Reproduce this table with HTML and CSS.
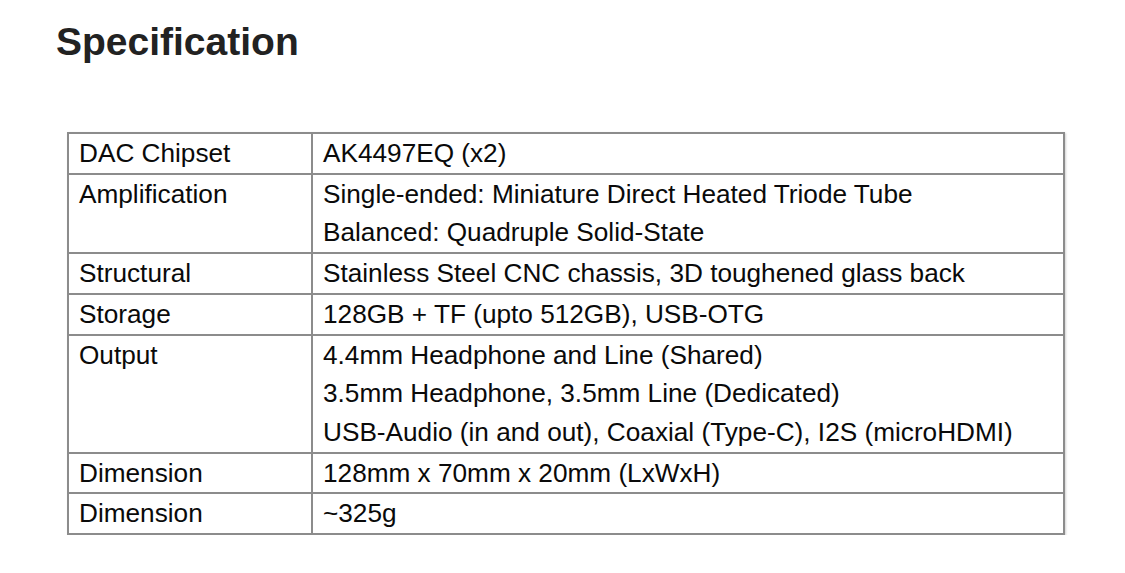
FILE: index.html
```html
<!DOCTYPE html>
<html lang="en">
<head>
<meta charset="utf-8">
<title>Specification</title>
<link rel="stylesheet" href="styles.css">
</head>
<body>
<main class="page">
  <h1 class="title">Specification</h1>
  <table class="spec">
    <tr><td class="key">DAC Chipset</td><td class="val">AK4497EQ (x2)</td></tr>
    <tr><td class="key">Amplification</td><td class="val">Single-ended: Miniature Direct Heated Triode Tube<br>Balanced: Quadruple Solid-State</td></tr>
    <tr><td class="key">Structural</td><td class="val">Stainless Steel CNC chassis, 3D toughened glass back</td></tr>
    <tr><td class="key">Storage</td><td class="val">128GB + TF (upto 512GB), USB-OTG</td></tr>
    <tr><td class="key">Output</td><td class="val">4.4mm Headphone and Line (Shared)<br>3.5mm Headphone, 3.5mm Line (Dedicated)<br>USB-Audio (in and out), Coaxial (Type-C), I2S (microHDMI)</td></tr>
    <tr><td class="key">Dimension</td><td class="val">128mm x 70mm x 20mm (LxWxH)</td></tr>
    <tr><td class="key">Dimension</td><td class="val">~325g</td></tr>
  </table>
</main>
</body>
</html>
```
FILE: styles.css
```css
html, body {
  margin: 0;
  padding: 0;
  background: #ffffff;
}

.page {
  padding: 19px 0 0 56px;
  font-family: "Liberation Sans", Arial, sans-serif;
}

.title {
  margin: 0;
  font-size: 39px;
  line-height: 45px;
  font-weight: 700;
  color: #222222;
}

.spec {
  margin: 68px 0 0 11px;
  width: 998px;
  border-collapse: collapse;
  font-size: 26.2px;
  line-height: 38.7px;
  color: #0a0a0a;
  box-shadow: 1px 1px 2px rgba(0, 0, 0, 0.18);
}

.spec td {
  border: 2px solid #8c8c8c;
  padding: 0 10px;
  vertical-align: top;
  text-align: left;
  white-space: nowrap;
}

.spec .key {
  width: 222px;
}
```
